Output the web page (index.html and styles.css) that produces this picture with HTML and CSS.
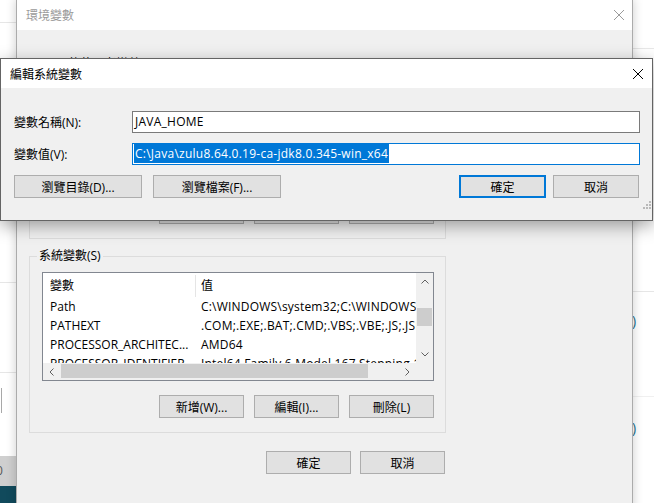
FILE: index.html
```html
<!DOCTYPE html>
<html lang="zh-Hant">
<head>
    <meta charset="UTF-8">
    <title>環境變數</title>
    <link rel="stylesheet" href="styles.css">
</head>
<body>
<div class="desk">

    <!-- windows behind, only their edges show -->
    <div class="strip strip-left">
        <div class="sl-a"></div>
        <div class="sl-b"></div>
        <div class="sl-c"></div>
        <div class="sl-d"></div>
        <div class="sl-box"></div>
        <div class="sl-e"></div>
        <div class="sl-task"><span>0</span></div>
        <div class="sl-bar"></div>
    </div>
    <div class="strip strip-right">
        <div class="sr-a"></div>
        <div class="sr-b"></div>
        <div class="sr-c"><span class="paren">)</span></div>
        <div class="sr-d"><span class="paren">)</span></div>
    </div>

    <!-- 環境變數 -->
    <div class="win env">
        <div class="titlebar">
            <span class="title">環境變數</span>
            <svg class="close" width="10" height="10" viewBox="0 0 10 10"><path d="M0 0L10 10M10 0L0 10" stroke="#9a9a9a" fill="none"/></svg>
        </div>
        <div class="env-body">
            <fieldset class="group group-user">
                <legend>User 的使用者變數(U)</legend>
                <div class="listbox"></div>
                <div class="btn-row">
                    <button class="btn">新增(N)...</button>
                    <button class="btn">編輯(E)...</button>
                    <button class="btn">刪除(D)</button>
                </div>
            </fieldset>

            <fieldset class="group group-sys">
                <legend>系統變數(S)</legend>
                <div class="listbox list-grid">
                    <div class="list-main">
                        <div class="list-head">
                            <div class="col-name">變數</div>
                            <div class="col-val">值</div>
                        </div>
                        <div class="list-row">
                            <div class="col-name">Path</div>
                            <div class="col-val">C:\WINDOWS\system32;C:\WINDOWS;C:\WINDOWS\System32\Wbem</div>
                        </div>
                        <div class="list-row">
                            <div class="col-name">PATHEXT</div>
                            <div class="col-val">.COM;.EXE;.BAT;.CMD;.VBS;.VBE;.JS;.JSE;.WSF;.WSH;.MSC</div>
                        </div>
                        <div class="list-row">
                            <div class="col-name">PROCESSOR_ARCHITEC...</div>
                            <div class="col-val">AMD64</div>
                        </div>
                        <div class="list-row">
                            <div class="col-name">PROCESSOR_IDENTIFIER</div>
                            <div class="col-val">Intel64 Family 6 Model 167 Stepping 1, GenuineIntel</div>
                        </div>
                    </div>
                    <div class="vscroll">
                        <div class="arrow"><svg width="8" height="5" viewBox="0 0 8 5"><path d="M0.5 4.5L4 1L7.5 4.5" fill="none" stroke="#606060"/></svg></div>
                        <div class="vtrack"><div class="vthumb"></div></div>
                        <div class="arrow"><svg width="8" height="5" viewBox="0 0 8 5"><path d="M0.5 0.5L4 4L7.5 0.5" fill="none" stroke="#606060"/></svg></div>
                    </div>
                    <div class="hscroll">
                        <div class="arrow"><svg width="5" height="8" viewBox="0 0 5 8"><path d="M4.5 0.5L1 4L4.5 7.5" fill="none" stroke="#606060"/></svg></div>
                        <div class="htrack"><div class="hthumb"></div></div>
                        <div class="arrow"><svg width="5" height="8" viewBox="0 0 5 8"><path d="M0.5 0.5L4 4L0.5 7.5" fill="none" stroke="#606060"/></svg></div>
                    </div>
                    <div class="corner"></div>
                </div>
                <div class="btn-row">
                    <button class="btn">新增(W)...</button>
                    <button class="btn">編輯(I)...</button>
                    <button class="btn">刪除(L)</button>
                </div>
            </fieldset>

            <div class="btn-row env-actions">
                <button class="btn">確定</button>
                <button class="btn">取消</button>
            </div>
        </div>
    </div>

    <!-- 編輯系統變數 -->
    <div class="win edit">
        <div class="titlebar">
            <span class="title">編輯系統變數</span>
            <svg class="close" width="10" height="10" viewBox="0 0 10 10"><path d="M0 0L10 10M10 0L0 10" stroke="#000" fill="none"/></svg>
        </div>
        <div class="edit-body">
            <div class="field-row">
                <label class="field-label">變數名稱(N):</label>
                <div class="textbox">JAVA_HOME</div>
            </div>
            <div class="field-row">
                <label class="field-label">變數值(V):</label>
                <div class="textbox focused"><span class="sel">C:\Java\zulu8.64.0.19-ca-jdk8.0.345-win_x64</span></div>
            </div>
            <div class="edit-actions">
                <button class="btn btn-wide">瀏覽目錄(D)...</button>
                <button class="btn btn-wide">瀏覽檔案(F)...</button>
                <span class="spacer"></span>
                <button class="btn btn-ok default">確定</button>
                <button class="btn btn-ok">取消</button>
            </div>
            <svg class="grip" width="10" height="10" viewBox="0 0 10 10">
                <rect x="8" y="0" width="2" height="2" fill="#b9b9b9"/>
                <rect x="5" y="3" width="2" height="2" fill="#b9b9b9"/>
                <rect x="8" y="3" width="2" height="2" fill="#b9b9b9"/>
                <rect x="2" y="6" width="2" height="2" fill="#b9b9b9"/>
                <rect x="5" y="6" width="2" height="2" fill="#b9b9b9"/>
                <rect x="8" y="6" width="2" height="2" fill="#b9b9b9"/>
            </svg>
        </div>
    </div>

</div>
</body>
</html>
```

FILE: styles.css
```css
* {
    box-sizing: border-box;
}
body {
    margin: 0;
    font-family: "Open Sans", "Noto Sans CJK TC", sans-serif;
    font-size: 12px;
    color: #000;
}
.desk {
    position: relative;
    width: 654px;
    height: 503px;
    overflow: hidden;
    background: #fff;
}

/* edges of other windows */
.strip {
    position: absolute;
    top: 0;
    height: 503px;
    display: flex;
    flex-direction: column;
    background: #fff;
}
.strip-left {
    left: 0;
    width: 18px;
}
.strip-right {
    right: 0;
    width: 22px;
}
.sl-a { height: 23px; border-bottom: 1px solid #e6e6e6; }
.sl-b { height: 260px; border-bottom: 1px solid #e6e6e6; }
.sl-c { height: 90px; border-bottom: 1px solid #e6e6e6; }
.sl-d { height: 15px; }
.sl-box { height: 25px; width: 2px; border-right: 1px solid #a8a8a8; }
.sl-e { height: 43px; }
.sl-task {
    height: 30px;
    background: #cfcfcf;
    color: #555;
    line-height: 30px;
    overflow: hidden;
    white-space: nowrap;
}
.sl-task span {
    margin-left: -4px;
}
.sl-bar {
    flex: 1;
    background: #114a5c;
}
.sr-a { height: 49px; border-bottom: 1px solid #e8e8e8; }
.sr-b { height: 243px; border-bottom: 1px solid #e6e6e6; }
.sr-c { height: 105px; padding-top: 19px; border-bottom: 1px solid #f0f0f0; }
.sr-d { padding-top: 21px; }
.paren {
    display: block;
    line-height: 20px;
    font-size: 14px;
    color: #1d6f8e;
}

/* windows */
.win {
    position: absolute;
    background: #f0f0f0;
}
.titlebar {
    display: flex;
    align-items: center;
    justify-content: space-between;
    background: #fff;
    padding-left: 9px;
}
.env {
    left: 16px;
    top: -1px;
    width: 617px;
    height: 560px;
    border: 1px solid #ababab;
    box-shadow: 0 0 10px rgba(0, 0, 0, 0.2);
}
.env .titlebar {
    height: 30px;
}
.env .title {
    color: #9a9a9a;
}
.env .close {
    margin-right: 8px;
}
.env-body {
    padding: 26px 0 0 12px;
}

.group {
    width: 417px;
    margin: 0;
    min-width: 0;
    padding: 8px 11px 14px 12px;
    border: 1px solid #dcdcdc;
}
.group legend {
    padding: 0 2px;
    margin-left: -5px;
    line-height: 16px;
}
.group-user .listbox {
    height: 107px;
}
.group-sys {
    margin-top: 9px;
}
.listbox {
    height: 109px;
    border: 1px solid #828790;
    background: #fff;
}
.list-grid {
    display: grid;
    grid-template-columns: 373px 17px;
    grid-template-rows: 90px 17px;
}
.list-main {
    overflow: hidden;
}
.list-head,
.list-row {
    display: flex;
    white-space: nowrap;
}
.list-head {
    height: 24px;
    line-height: 22px;
    padding-top: 2px;
}
.list-row {
    height: 19px;
    line-height: 19px;
}
.col-name {
    flex: none;
    width: 153px;
    padding-left: 7px;
    overflow: hidden;
}
.list-head .col-name {
    border-right: 1px solid #e5e5e5;
}
.col-val {
    flex: none;
    padding-left: 5px;
    letter-spacing: 0.2px;
}
.vscroll,
.hscroll {
    display: flex;
    background: #f0f0f0;
}
.vscroll {
    flex-direction: column;
}
.arrow {
    flex: none;
    width: 17px;
    height: 17px;
    display: flex;
    align-items: center;
    justify-content: center;
}
.vtrack,
.htrack {
    flex: 1;
}
.vthumb {
    margin: 18px 1px 0 1px;
    height: 18px;
    background: #cdcdcd;
}
.hthumb {
    margin: 1px 0 0 1px;
    width: 307px;
    height: 14px;
    background: #cdcdcd;
}
.corner {
    background: #f0f0f0;
}

.btn-row {
    display: flex;
    justify-content: flex-end;
    gap: 10px;
    margin-top: 14px;
}
.btn {
    width: 85px;
    height: 23px;
    padding: 0;
    border: 1px solid #adadad;
    background: #e1e1e1;
    font: inherit;
    color: #000;
}
.env-actions {
    width: 417px;
    margin-top: 18px;
    padding-right: 1px;
    gap: 9px;
}

/* 編輯系統變數 */
.edit {
    left: 0;
    top: 58px;
    width: 653px;
    height: 163px;
    border: 1px solid #646464;
    box-shadow: 0 5px 16px rgba(0, 0, 0, 0.35);
}
.edit .titlebar {
    height: 29px;
}
.edit .close {
    margin-right: 9px;
}
.edit-body {
    position: relative;
    padding: 23px 12px 0 13px;
}
.field-row {
    display: flex;
    align-items: center;
    height: 22px;
    margin-bottom: 10px;
}
.field-label {
    width: 118px;
    flex: none;
}
.textbox {
    flex: 1;
    height: 22px;
    line-height: 20px;
    padding: 0 0 0 2px;
    border: 1px solid #7a7a7a;
    background: #fff;
    white-space: nowrap;
    letter-spacing: 0.25px;
}
.textbox.focused {
    border-color: #0078d7;
}
.sel {
    display: inline-block;
    line-height: 19px;
    padding: 0 1px;
    margin-left: -1px;
    background: #0078d7;
    color: #fff;
}
.edit-actions {
    display: flex;
    gap: 11px;
    margin-top: 7px;
    padding-right: 1px;
}
.btn-wide {
    width: 128px;
}
.spacer {
    flex: 1;
}
.btn-ok {
    width: 86px;
    margin-left: -4px;
}
.btn-ok.default {
    width: 87px;
    margin-left: 0;
    border: 2px solid #0078d7;
}
.grip {
    position: absolute;
    right: 1px;
    bottom: -13px;
}
```
